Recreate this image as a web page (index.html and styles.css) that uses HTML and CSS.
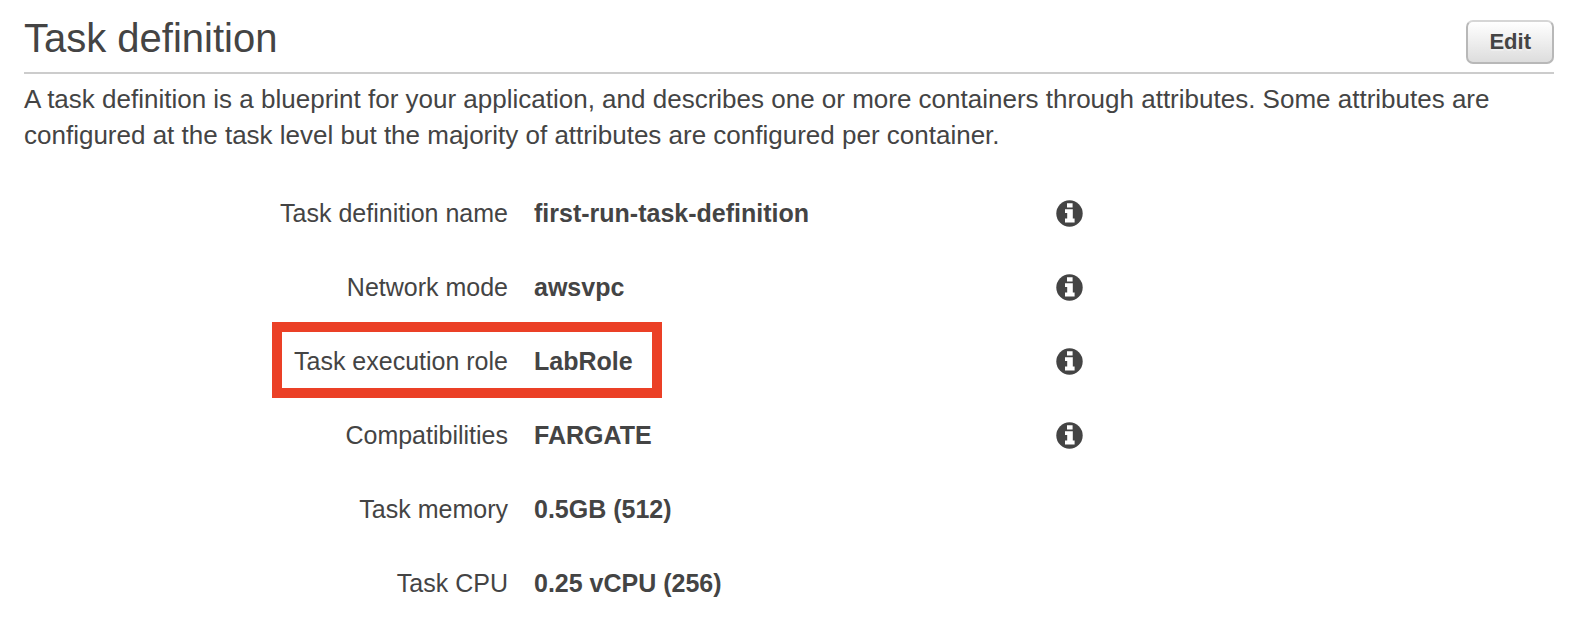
FILE: index.html
```html
<!DOCTYPE html>
<html lang="en">
<head>
<meta charset="utf-8">
<meta name="viewport" content="width=device-width, initial-scale=1">
<title>Task definition</title>
<link rel="stylesheet" href="styles.css">
</head>
<body>
<svg class="symbols" aria-hidden="true">
  <symbol id="info" viewBox="0 0 27 27">
    <circle cx="13.5" cy="13.5" r="13.2" fill="#444"/>
    <path fill="#fff" d="M11 3.2h5.6v4.4H11zM9 9.2h7.8v9.4h1.8v3.8H9v-3.8h2.2v-5.6H9z"/>
  </symbol>
</svg>
<main class="panel">
  <header class="panel-header">
    <h1 class="panel-title">Task definition</h1>
    <button class="button" type="button">Edit</button>
  </header>
  <p class="description">A task definition is a blueprint for your application, and describes one or more containers through attributes. Some attributes are configured at the task level but the majority of attributes are configured per container.</p>
  <dl class="fields">
    <div class="field">
      <dt class="label">Task definition name</dt>
      <dd class="value">first-run-task-definition</dd>
      <dd class="help"><svg class="icon" role="img" aria-label="Info"><use href="#info"/></svg></dd>
    </div>
    <div class="field">
      <dt class="label">Network mode</dt>
      <dd class="value">awsvpc</dd>
      <dd class="help"><svg class="icon" role="img" aria-label="Info"><use href="#info"/></svg></dd>
    </div>
    <div class="field">
      <dt class="label">Task execution role</dt>
      <dd class="value">LabRole<span class="highlight"></span></dd>
      <dd class="help"><svg class="icon" role="img" aria-label="Info"><use href="#info"/></svg></dd>
    </div>
    <div class="field">
      <dt class="label">Compatibilities</dt>
      <dd class="value">FARGATE</dd>
      <dd class="help"><svg class="icon" role="img" aria-label="Info"><use href="#info"/></svg></dd>
    </div>
    <div class="field">
      <dt class="label">Task memory</dt>
      <dd class="value">0.5GB (512)</dd>
    </div>
    <div class="field">
      <dt class="label">Task CPU</dt>
      <dd class="value">0.25 vCPU (256)</dd>
    </div>
  </dl>
</main>
</body>
</html>
```
FILE: styles.css
```css
body {
  margin: 0;
  background: #fff;
  color: #444;
  font: 26px/36px "Helvetica Neue", "Liberation Sans", Arial, sans-serif;
}

.symbols {
  display: none;
}

.panel {
  padding: 14px 22px 0 24px;
}

.panel-header {
  display: flex;
  align-items: flex-end;
  justify-content: space-between;
  padding-bottom: 8px;
  border-bottom: 2px solid #ccc;
}

.panel-title {
  margin: 0;
  padding-bottom: 2px;
  font-size: 40px;
  font-weight: 400;
  line-height: 48px;
}

.button {
  padding: 0 21px;
  border: 2px solid #b8b8b8;
  border-top-color: #d6d6d6;
  border-radius: 7px;
  background: linear-gradient(#fff, #ddd);
  color: #444;
  font: bold 22px/40px "Helvetica Neue", "Liberation Sans", Arial, sans-serif;
  text-shadow: 0 2px 0 #eee;
}

.description {
  margin: 7px 0 23px;
}

.fields {
  margin: 0;
  font-size: 25px;
}

.field {
  display: grid;
  grid-template-columns: 484fr 496fr 498fr;
  column-gap: 26px;
  align-items: center;
  min-height: 74px;
}

.label {
  text-align: right;
}

.value {
  position: relative;
  margin: 0;
  font-weight: 700;
}

.help {
  display: flex;
  margin: 0;
}

.icon {
  width: 27px;
  height: 27px;
}

.highlight {
  position: absolute;
  top: -21px;
  left: -262px;
  box-sizing: border-box;
  width: 390px;
  height: 76px;
  border: 10px solid #eb4026;
}
```
